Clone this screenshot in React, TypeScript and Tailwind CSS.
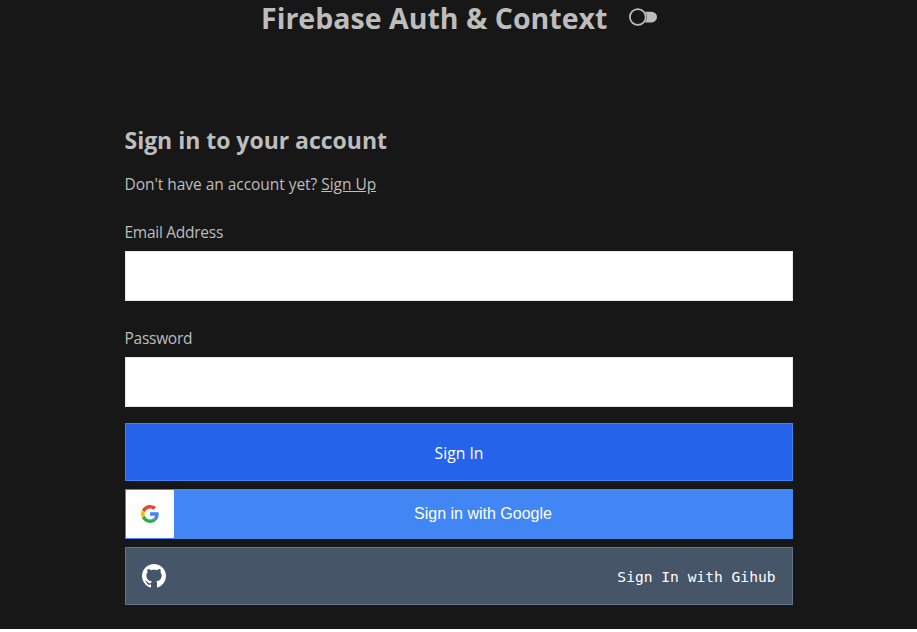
import React from "react";

const ui = "font-['Open_Sans','Noto_Sans',sans-serif]";

function ToggleIcon() {
  return (
    <svg width="30" height="20" viewBox="0 0 30 20" className="-mt-0.5 ml-5 shrink-0" aria-hidden="true">
      <path d="M16 4.8h7.7a5.3 5.3 0 0 1 0 10.6H16z" fill="#bdbdbd" />
      <circle cx="9.8" cy="10" r="9" fill="#171717" />
      <circle cx="9.8" cy="10" r="7.9" fill="#171717" stroke="#bdbdbd" strokeWidth="1.7" />
    </svg>
  );
}

function GoogleIcon() {
  return (
    <svg width="18" height="18" viewBox="0 0 18 18" aria-hidden="true">
      <path d="M9 3.48c1.69 0 2.83.73 3.48 1.34l2.54-2.48C13.46.89 11.43 0 9 0 5.48 0 2.44 2.02.96 4.96l2.91 2.26C4.6 5.05 6.62 3.48 9 3.48z" fill="#EA4335" />
      <path d="M17.64 9.2c0-.74-.06-1.28-.19-1.84H9v3.34h4.96c-.1.83-.64 2.08-1.84 2.92l2.84 2.2c1.7-1.57 2.68-3.88 2.68-6.62z" fill="#4285F4" />
      <path d="M3.88 10.78A5.54 5.54 0 0 1 3.58 9c0-.62.11-1.22.29-1.78L.96 4.96A9.01 9.01 0 0 0 0 9c0 1.45.35 2.82.96 4.04l2.92-2.26z" fill="#FBBC05" />
      <path d="M9 18c2.43 0 4.47-.8 5.96-2.18l-2.84-2.2c-.76.53-1.78.9-3.12.9-2.38 0-4.4-1.57-5.12-3.74L.97 13.04C2.45 15.98 5.48 18 9 18z" fill="#34A853" />
    </svg>
  );
}

function GithubIcon() {
  return (
    <svg width="24" height="24" viewBox="0 0 16 16" fill="#fff" aria-hidden="true">
      <path d="M8 0C3.58 0 0 3.58 0 8c0 3.54 2.29 6.53 5.47 7.59.4.07.55-.17.55-.38 0-.19-.01-.82-.01-1.49-2.01.37-2.53-.49-2.69-.94-.09-.23-.48-.94-.82-1.13-.28-.15-.68-.52-.01-.53.63-.01 1.08.58 1.23.82.72 1.21 1.87.87 2.33.66.07-.52.28-.87.51-1.07-1.78-.2-3.64-.89-3.64-3.95 0-.87.31-1.59.82-2.15-.08-.2-.36-1.02.08-2.12 0 0 .67-.21 2.2.82.64-.18 1.32-.27 2-.27s1.36.09 2 .27c1.53-1.04 2.2-.82 2.2-.82.44 1.1.16 1.92.08 2.12.51.56.82 1.27.82 2.15 0 3.07-1.87 3.75-3.65 3.95.29.25.54.73.54 1.48 0 1.07-.01 1.93-.01 2.2 0 .21.15.46.55.38A8.01 8.01 0 0 0 16 8c0-4.42-3.58-8-8-8z" />
    </svg>
  );
}

function Field({ label, type }: { label: string; type: string }) {
  return (
    <label className="flex flex-col py-2">
      <span className="pt-px pb-[7px] text-[15.5px] leading-6 tracking-[-0.27px]">{label}</span>
      <input type={type} className="h-[50px] border border-gray-200 bg-white p-3 text-black outline-none" />
    </label>
  );
}

export default function App() {
  return (
    <div className={`h-[632px] overflow-hidden bg-white ${ui}`}>
      <div className="h-[629px] bg-[#171717] text-[#bdbdbd]">
        <header className="flex h-9 items-center pl-[261px]">
          <h1 className="w-[347px] whitespace-nowrap text-[28.5px] leading-9 font-bold tracking-[0.02px]">Firebase Auth &amp; Context</h1>
          <ToggleIcon />
        </header>
        <main className="mx-auto mt-[88px] w-[668px]">
          <h2 className="text-[23px] leading-8 font-bold tracking-[-0.02px]">Sign in to your account</h2>
          <p className="mt-1 py-3 text-[15.5px] leading-6 tracking-[-0.04px]">
            Don't have an account yet? <a className="underline">Sign Up</a>
          </p>
          <div className="mt-[3px]">
            <Field label="Email Address" type="email" />
          </div>
          <div className="mt-2">
            <Field label="Password" type="password" />
          </div>
          <button className="mt-2 flex h-[58px] w-full items-center justify-center border border-[#3b82f6] bg-[#2563eb] pt-[3px] pl-px text-[15.7px] text-white">
            Sign In
          </button>
          <button className="mt-2 flex h-[50px] w-full items-center border border-[#4285f4] bg-[#4285f4] font-['Liberation_Sans',sans-serif] text-base text-white shadow">
            <span className="flex h-12 w-12 items-center justify-center rounded-[1px] bg-white"><GoogleIcon /></span>
            <span className="flex-1 pl-px text-center">Sign in with Google</span>
          </button>
          <button className="mt-2 flex h-[58px] w-full items-center justify-between border border-[#64748b] bg-[#475569] px-4 font-['DejaVu_Sans_Mono',monospace] text-[14.6px] text-white">
            <GithubIcon />
            <span className="pt-0.5">Sign In with Gihub</span>
          </button>
        </main>
      </div>
    </div>
  );
}
